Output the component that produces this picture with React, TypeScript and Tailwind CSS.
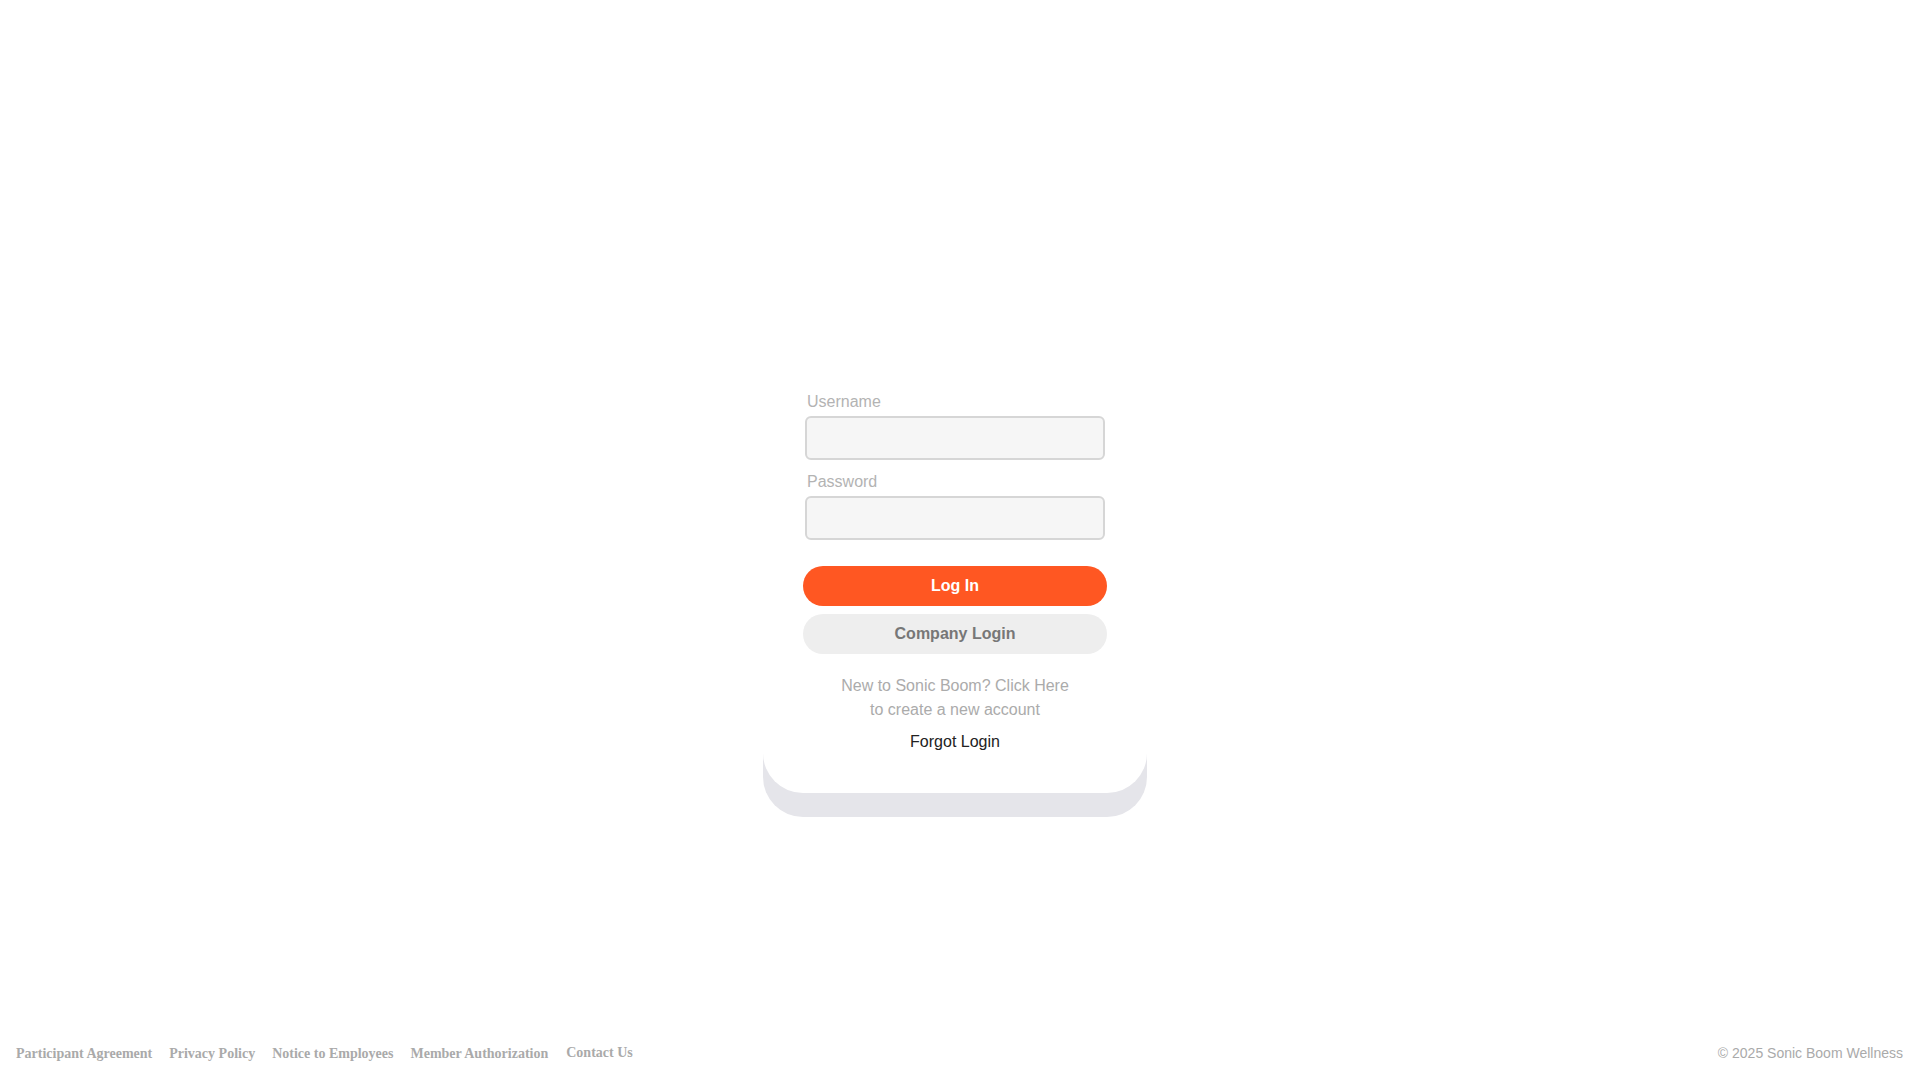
import React from "react";

export default function App() {
  return (
    <div className="relative h-screen w-full bg-white overflow-hidden" style={{ fontFamily: '"Liberation Sans", Arial, sans-serif' }}>
      <div className="flex h-full w-full items-center justify-center pr-[10px]">
        <div className="w-[384px] bg-white rounded-b-[40px] shadow-[0_24px_0_0_#e5e5ea] px-10 pt-[105px] pb-[39px]">
          <div className="px-[2px]">
            <div className="pl-[2px] text-[16px] leading-[20px] text-[#b3b3b3]">Username</div>
            <input type="text" className="mt-1 block h-[44px] w-full rounded-[6px] border-2 border-[#d6d6d6] bg-[#f6f6f6] px-2 outline-none" />
            <div className="mt-3 pl-[2px] text-[16px] leading-[20px] text-[#b3b3b3]">Password</div>
            <input type="password" className="mt-1 block h-[44px] w-full rounded-[6px] border-2 border-[#d6d6d6] bg-[#f6f6f6] px-2 outline-none" />
          </div>
          <button className="mt-[26px] block h-[40px] w-full rounded-full bg-[#ff5722] text-[16px] font-bold text-white">Log In</button>
          <button className="mt-2 block h-[40px] w-full rounded-full bg-[#eeeeee] text-[16px] font-bold text-[#777777]">Company Login</button>
          <div className="mt-[20px] text-center text-[16px] leading-[24px] text-[#ababab]">
            <div>New to Sonic Boom? Click Here</div>
            <div>to create a new account</div>
          </div>
          <div className="mt-[8px] text-center text-[16px] leading-[24px] text-[#222222]">Forgot Login</div>
        </div>
      </div>
      <div className="absolute bottom-0 left-0 right-0 flex h-[50px] items-center justify-between pl-[16px] pr-[17px] pb-[4px]">
        <div className="flex items-center gap-[17px] text-[14px] font-bold text-[#aaaaaa]" style={{ fontFamily: '"Liberation Serif", "Times New Roman", serif' }}>
          <span>Participant Agreement</span>
          <span>Privacy Policy</span>
          <span>Notice to Employees</span>
          <span>Member Authorization</span>
          <span className="relative -top-px ml-[1px]">Contact Us</span>
        </div>
        <div className="text-[14px] text-[#aaaaaa]">© 2025 Sonic Boom Wellness</div>
      </div>
    </div>
  );
}
